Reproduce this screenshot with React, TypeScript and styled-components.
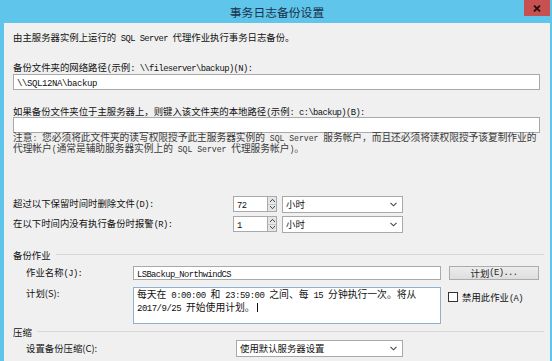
import React from 'react';
import styled, { createGlobalStyle } from 'styled-components';

const GlobalStyle = createGlobalStyle`
  html, body {
    margin: 0;
    padding: 0;
    background: #5fc5ea;
  }
  body {
    width: 552px;
    height: 361px;
    overflow: hidden;
  }
`;

const Window = styled.div`
  width: 552px;
  height: 361px;
  display: flex;
  flex-direction: column;
  background: #5fc5ea;
  font-family: "Noto Sans CJK SC", sans-serif;
  font-size: 9.4px;
  color: #111;
`;

const TitleBar = styled.div`
  height: 23px;
  flex: none;
  display: grid;
  grid-template-columns: 1fr auto 1fr;
  align-items: center;
`;

const Title = styled.div`
  grid-column: 2;
  font-size: 11.8px;
  color: #1b3149;
  padding-left: 2px;
`;

const CloseButton = styled.div`
  grid-column: 3;
  justify-self: end;
  align-self: start;
  width: 26px;
  height: 16px;
  margin-right: 2px;
  background: #c75050;
  display: flex;
  align-items: center;
  justify-content: center;
`;

const Content = styled.div`
  flex: 1;
  margin: 0 2px 0 4px;
  background: #f0f0f0;
  padding: 8px 10px 0 9px;
  display: flex;
  flex-direction: column;
`;

// SimSun-like half-width latin: monospaced, half the CJK width
const Latin = styled.span<{ $size: number; $advance: number }>`
  font-family: "Liberation Mono", monospace;
  font-size: ${p => p.$size}px;
  letter-spacing: ${p => (p.$advance - p.$size * 0.6).toFixed(2)}px;
`;

const Mixed = ({ text, size = 8.8, advance = 4.7 }: { text: string; size?: number; advance?: number }) => (
  <>
    {text.split(/([\x00-\x7f]+)/).map((part, i) =>
      /^[\x00-\x7f]+$/.test(part) ? (
        <Latin key={i} $size={size} $advance={advance}>
          {part}
        </Latin>
      ) : (
        part
      )
    )}
  </>
);

const Line = styled.div<{ $top?: number }>`
  line-height: 12px;
  height: 12px;
  white-space: nowrap;
  margin-top: ${p => p.$top ?? 0}px;
`;

const TextBox = styled.div<{ $top?: number; $width?: number; $height?: number }>`
  box-sizing: border-box;
  height: ${p => p.$height ?? 16}px;
  width: ${p => (p.$width ? `${p.$width}px` : 'auto')};
  margin-top: ${p => p.$top ?? 0}px;
  background: #fff;
  border: 1px solid #a9a9a9;
  padding: 0 3px;
  line-height: ${p => (p.$height ?? 16) - 2}px;
  white-space: nowrap;
  flex: none;
`;

const Note = styled.div`
  margin-top: 0.3px;
  height: 17.4px;
  line-height: 9.4px;
  font-family: "Liberation Serif", "Noto Sans CJK SC", sans-serif;
  font-size: 9.7px;
  color: #3a3a3a;
  white-space: nowrap;
`;

const Row = styled.div<{ $top?: number; $indent?: number; $align?: string }>`
  display: flex;
  align-items: ${p => p.$align ?? 'center'};
  margin-top: ${p => p.$top ?? 0}px;
  padding-left: ${p => p.$indent ?? 0}px;
`;

const Label = styled.div<{ $width: number }>`
  width: ${p => p.$width}px;
  flex: none;
  line-height: 12px;
  white-space: nowrap;
`;

const Spin = styled.div`
  display: flex;
  height: 16px;
  width: 44px;
  flex: none;
`;

const SpinValue = styled.div`
  box-sizing: border-box;
  flex: 1;
  background: #fff;
  border: 1px solid #a9a9a9;
  border-right: none;
  padding-left: 3px;
  line-height: 14px;
`;

const SpinButtons = styled.div`
  box-sizing: border-box;
  width: 10px;
  display: flex;
  flex-direction: column;
  border: 1px solid #a9a9a9;
  background: #e6e6e6;
`;

const SpinHalf = styled.div`
  flex: 1;
  display: flex;
  align-items: center;
  justify-content: center;
  &:first-child {
    border-bottom: 1px solid #c8c8c8;
  }
`;

const Select = styled.div<{ $width: number; $gap?: number }>`
  box-sizing: border-box;
  width: ${p => p.$width}px;
  height: 17px;
  margin-left: ${p => p.$gap ?? 0}px;
  background: #fff;
  border: 1px solid #a9a9a9;
  display: flex;
  align-items: center;
  justify-content: space-between;
  padding: 0 5px 0 3px;
  flex: none;
`;

const GroupHeader = styled.div<{ $top: number }>`
  display: flex;
  align-items: center;
  gap: 5px;
  margin-top: ${p => p.$top}px;
  margin-right: -4px;
  line-height: 12px;
  &::after {
    content: '';
    flex: 1;
    height: 1px;
    background: #d7d7d7;
  }
`;

const PushButton = styled.div`
  box-sizing: border-box;
  width: 90px;
  height: 14px;
  margin-left: 8px;
  background: linear-gradient(#ececec, #dedede);
  border: 1px solid #acacac;
  display: flex;
  align-items: center;
  justify-content: center;
  color: #222;
  white-space: nowrap;
`;

const Schedule = styled.div`
  box-sizing: border-box;
  width: 308px;
  height: 37px;
  background: #fff;
  border: 1px solid #8fb0cf;
  padding: 1px 3px;
  line-height: 11px;
  font-size: 9.8px;
  white-space: nowrap;
  flex: none;
`;

const Caret = styled.span`
  display: inline-block;
  width: 1px;
  height: 9px;
  background: #111;
  margin-left: 2px;
  vertical-align: -1px;
`;

const CheckRow = styled.div`
  display: flex;
  align-items: center;
  gap: 4px;
  margin: 3px 0 0 7px;
  white-space: nowrap;
`;

const CheckBox = styled.div`
  box-sizing: border-box;
  width: 10px;
  height: 10px;
  background: #fff;
  border: 1px solid #333;
`;

const Chevron = () => (
  <svg width="7" height="5" viewBox="0 0 7 5">
    <path d="M0.5 0.8 L3.5 3.8 L6.5 0.8" fill="none" stroke="#444" strokeWidth="1.1" />
  </svg>
);

const Arrow = ({ up }: { up?: boolean }) => (
  <svg width="5" height="3" viewBox="0 0 5 3">
    <path d={up ? 'M0 3 L2.5 0.3 L5 3' : 'M0 0 L2.5 2.7 L5 0'} fill="none" stroke="#333" strokeWidth="0.9" />
  </svg>
);

const SpinRow = ({ label, value, top }: { label: string; value: string; top: number }) => (
  <Row $top={top}>
    <Label $width={220}>
      <Mixed text={label} />
    </Label>
    <Spin>
      <SpinValue>
        <Mixed text={value} />
      </SpinValue>
      <SpinButtons>
        <SpinHalf>
          <Arrow up />
        </SpinHalf>
        <SpinHalf>
          <Arrow />
        </SpinHalf>
      </SpinButtons>
    </Spin>
    <Select $width={121} $gap={5}>
      <span>小时</span>
      <Chevron />
    </Select>
  </Row>
);

export default function App() {
  return (
    <Window>
      <GlobalStyle />
      <TitleBar>
        <Title>事务日志备份设置</Title>
        <CloseButton>
          <svg width="8" height="7" viewBox="0 0 8 7">
            <path d="M1 0.5 L7 6.5 M7 0.5 L1 6.5" stroke="#2a1212" strokeWidth="1.8" />
          </svg>
        </CloseButton>
      </TitleBar>
      <Content>
        <Line>
          <Mixed text="由主服务器实例上运行的 SQL Server 代理作业执行事务日志备份。" />
        </Line>
        <Line $top={18}>
          <Mixed text="备份文件夹的网络路径(示例: \\fileserver\backup)(N):" />
        </Line>
        <TextBox $top={1}>
          <Mixed text="\\SQL12NA\backup" size={9} advance={5} />
        </TextBox>
        <Line $top={15}>
          <Mixed text="如果备份文件夹位于主服务器上，则键入该文件夹的本地路径(示例: c:\backup)(B):" />
        </Line>
        <TextBox />
        <Note>
          <Mixed
            size={8.2}
            advance={4.87}
            text="注意: 您必须将此文件夹的读写权限授予此主服务器实例的 SQL Server 服务帐户，而且还必须将读权限授予该复制作业的"
          />
          <br />
          <Mixed size={8.2} advance={4.87} text="代理帐户(通常是辅助服务器实例上的 SQL Server 代理服务帐户)。" />
        </Note>
        <SpinRow top={45} label="超过以下保留时间时删除文件(D):" value="72" />
        <SpinRow top={3} label="在以下时间内没有执行备份时报警(R):" value="1" />
        <GroupHeader $top={16}>备份作业</GroupHeader>
        <Row $top={5} $indent={13}>
          <Label $width={107}>
            <Mixed text="作业名称(J):" />
          </Label>
          <TextBox $width={308} $height={14}>
            <Mixed text="LSBackup_NorthwindCS" />
          </TextBox>
          <PushButton>
            <Mixed text="计划(E)..." />
          </PushButton>
        </Row>
        <Row $top={7} $indent={13} $align="flex-start">
          <Label $width={107}>计划(S):</Label>
          <Schedule>
            <Mixed size={9} advance={4.9} text="每天在 0:00:00 和 23:59:00 之间、每 15 分钟执行一次。将从" />
            <br />
            <Mixed size={9} advance={4.9} text="2017/9/25 开始使用计划。" />
            <Caret />
          </Schedule>
          <CheckRow>
            <CheckBox />
            <span>
              <Mixed text="禁用此作业(A)" />
            </span>
          </CheckRow>
        </Row>
        <GroupHeader $top={2}>压缩</GroupHeader>
        <Row $top={2} $indent={13}>
          <Label $width={210}>设置备份压缩(C):</Label>
          <Select $width={167}>
            <span>使用默认服务器设置</span>
            <Chevron />
          </Select>
        </Row>
      </Content>
    </Window>
  );
}
